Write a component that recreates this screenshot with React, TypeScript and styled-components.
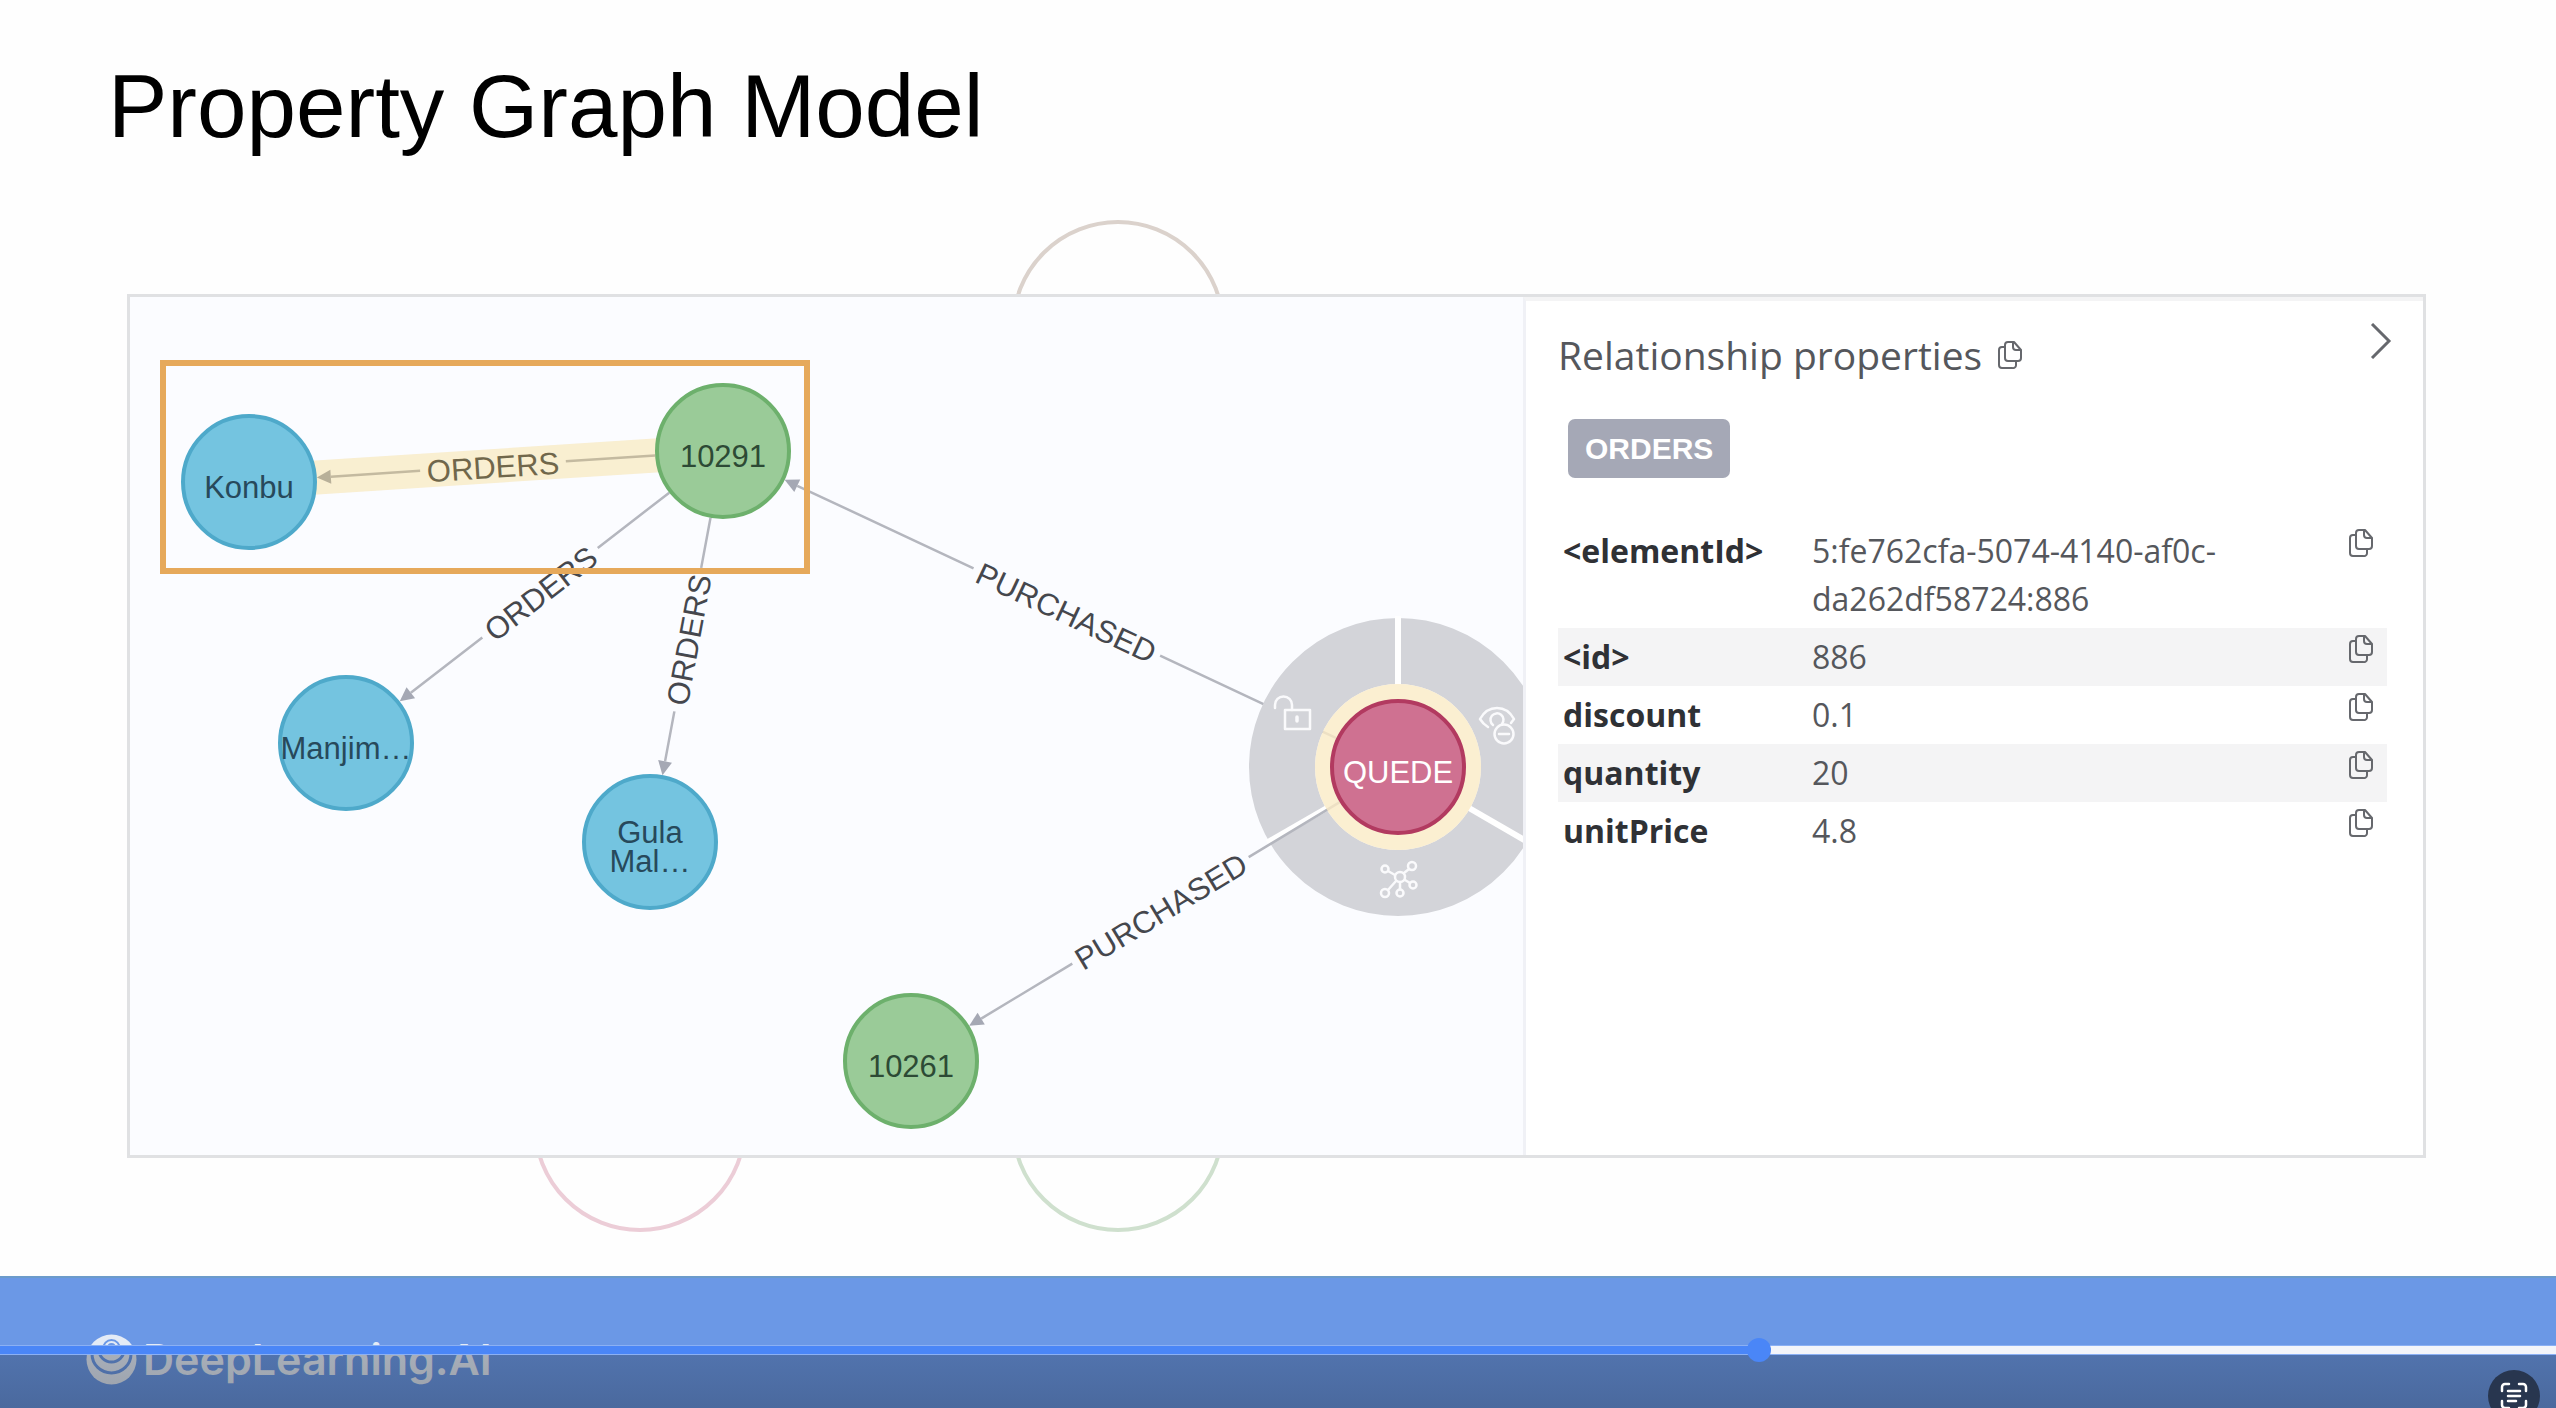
import React from "react";
import styled, { createGlobalStyle } from "styled-components";

const GlobalStyle = createGlobalStyle`
  *, *::before, *::after { box-sizing: border-box; }
  body { margin: 0; background: #fefefe; overflow: hidden; }
`;

const sans = `"Liberation Sans", Arial, sans-serif`;
const humanist = `"Open Sans", "Noto Sans", sans-serif`;

const Player = styled.main`
  display: flex;
  flex-direction: column;
  height: 100vh;
  font-family: ${sans};
  overflow: hidden;
`;

const Slide = styled.section`
  flex: 1;
  padding: 56px 130px 0 127px;
`;

const Title = styled.h1`
  margin: 0 0 0 -19px;
  font-size: 89px;
  line-height: 100px;
  font-weight: 400;
  color: #000;
`;

const Stage = styled.div`
  position: relative;
  margin-top: 138px;
`;

const Ring = styled.span<{ $x: number; $edge: "top" | "bottom"; $color: string }>`
  position: absolute;
  left: ${(p) => p.$x}px;
  ${(p) => p.$edge}: -74px;
  width: 214px;
  height: 214px;
  border: 4px solid ${(p) => p.$color};
  border-radius: 50%;
`;

const Card = styled.div`
  position: relative;
  display: grid;
  grid-template-columns: minmax(0, 1393fr) minmax(0, 900fr);
  border: 3px solid #e0e1e3;
  background: #fff;
`;

const GraphArea = styled.div`
  background: #fbfcff;
`;

const GraphSvg = styled.svg`
  display: block;
  width: 100%;
  height: auto;
  font-family: ${sans};
  font-size: 31px;
`;

const Details = styled.aside`
  padding: 22px 36px 0 32px;
  border-left: 3px solid #f0f1f6;
  border-top: 4px solid #f4f4f5;
  font-family: ${humanist};
  color: #55575c;
`;

const DetailsHead = styled.header`
  display: flex;
  align-items: flex-start;
  justify-content: space-between;
`;

const Heading = styled.h2`
  display: flex;
  align-items: center;
  gap: 16px;
  margin: 0;
  padding-top: 4px;
  font-size: 39px;
  line-height: 56px;
  font-weight: 400;
`;

const IconButton = styled.button`
  display: block;
  padding: 0;
  border: 0;
  background: none;
  color: #66686d;
  line-height: 0;
`;

const ChevronButton = styled(IconButton)`
  margin-right: -6px;
`;

const Badge = styled.span`
  display: inline-block;
  margin: 36px 0 0 10px;
  padding: 0 17px;
  border-radius: 7px;
  background: #a5a8b6;
  color: #fff;
  font: 700 30px/59px ${sans};
`;

const Table = styled.table`
  width: 100%;
  margin-top: 44px;
  border-collapse: collapse;
  font-size: 32px;
  line-height: 48px;
`;

const Row = styled.tr`
  vertical-align: top;
  &:nth-child(even) { background: #f4f4f5; }
`;

const Key = styled.th`
  width: 254px;
  padding: 5px;
  text-align: left;
  font-weight: 700;
  color: #2f3135;
`;

const Value = styled.td`
  padding: 5px 0;
`;

const Wrapped = styled.div`
  max-width: 440px;
  overflow-wrap: break-word;
`;

const Action = styled.td`
  width: 38px;
  padding: 7px 0 0;
`;

const Footer = styled.footer`
  position: relative;
  height: 132px;
  padding: 55px 0 0 86px;
  background: #6b98e6;
  border-top: 2px solid #6c9bcb;
`;

const Brand = styled.div`
  display: flex;
  align-items: center;
  gap: 6px;
  color: #e4ebf6;
  font: 600 43px/52px Inter, sans-serif;
`;

const Shade = styled.div`
  position: absolute;
  inset: auto 0 0 0;
  height: 58px;
  background: linear-gradient(rgba(16, 22, 30, 0.28), rgba(16, 22, 30, 0.36));
`;

const Seek = styled.input`
  position: absolute;
  left: 0;
  bottom: 46px;
  width: 100%;
  height: 24px;
  margin: 0;
  appearance: none;
  background: none;

  &::-webkit-slider-runnable-track {
    height: 10px;
    border: solid #8bb0f4;
    border-width: 1px 0;
    background: linear-gradient(90deg, #4a86f7 68.8%, #f3f5fa 68.8%);
  }
  &::-webkit-slider-thumb {
    appearance: none;
    width: 24px;
    height: 24px;
    margin-top: -8px;
    border-radius: 50%;
    background: #4a86f7;
  }
`;

const ScanButton = styled.button`
  position: fixed;
  right: 16px;
  bottom: -14px;
  display: grid;
  place-items: center;
  width: 52px;
  height: 52px;
  padding: 0;
  border: 0;
  border-radius: 50%;
  background: #28364f;
  color: #fff;
`;

type Palette = { fill: string; stroke: string; text: string };
const blue: Palette = { fill: "#74c4e0", stroke: "#4ea9ca", text: "#27495b" };
const green: Palette = { fill: "#9acb98", stroke: "#6db06c", text: "#2d4a35" };
const pink: Palette = { fill: "#cf7191", stroke: "#b23a60", text: "#ffffff" };

type NodeData = { x: number; y: number; lines: string[]; palette: Palette };
const nodes: Record<string, NodeData> = {
  konbu: { x: 119, y: 185, lines: ["Konbu"], palette: blue },
  o10291: { x: 593, y: 154, lines: ["10291"], palette: green },
  manjim: { x: 216, y: 446, lines: ["Manjim…"], palette: blue },
  gula: { x: 520, y: 545, lines: ["Gula", "Mal…"], palette: blue },
  o10261: { x: 781, y: 764, lines: ["10261"], palette: green },
  quede: { x: 1268, y: 470, lines: ["QUEDE"], palette: pink },
};

const R = 68;
const HEAD = 14;

function GraphNode({ x, y, lines, palette }: NodeData) {
  const first = lines.length === 1 ? y + 16 : y + 1;
  return (
    <g>
      <circle cx={x} cy={y} r={R - 2} fill={palette.fill} stroke={palette.stroke} strokeWidth={4} />
      <text textAnchor="middle" fill={palette.text}>
        {lines.map((line, i) => (
          <tspan key={line} x={x} y={first + i * 29}>
            {line}
          </tspan>
        ))}
      </text>
    </g>
  );
}

function Edge({ from, to, label, gap, selected }: { from: string; to: string; label: string; gap: number; selected?: boolean }) {
  const a = nodes[from];
  const b = nodes[to];
  const dx = b.x - a.x;
  const dy = b.y - a.y;
  const length = Math.hypot(dx, dy);
  const angle = (Math.atan2(dy, dx) * 180) / Math.PI;
  const end = length - R;
  const mid = (R + end - HEAD) / 2;
  const flip = Math.abs(angle) > 90;
  return (
    <g transform={`translate(${a.x} ${a.y}) rotate(${angle})`}>
      <path
        d={`M${R} 0H${mid - gap / 2}M${mid + gap / 2} 0H${end - HEAD}`}
        stroke="#b4b6be"
        strokeWidth={2.5}
      />
      <path d={`M${end} 0l${-HEAD} -7v14z`} fill="#a5a8b4" />
      <text transform={`translate(${mid} 0) rotate(${flip ? 180 : 0})`} y={12} textAnchor="middle" fill="#45474d">
        {label}
      </text>
      {selected && <rect x={R - 4} y={-17} width={end - R + 8} height={34} fill="#f5c646" fillOpacity={0.25} />}
    </g>
  );
}

function polar(deg: number, r: number) {
  const t = (deg * Math.PI) / 180;
  return `${nodes.quede.x + r * Math.cos(t)} ${nodes.quede.y + r * Math.sin(t)}`;
}

function NodeMenu() {
  return (
    <g>
      <circle cx={1268} cy={470} r={116} fill="none" stroke="#d3d4d9" strokeWidth={66} />
      {[-90, 30, 150].map((deg) => (
        <path key={deg} d={`M${polar(deg, 82)}L${polar(deg, 151)}`} stroke="#fff" strokeWidth={6} />
      ))}
      <g fill="none" stroke="#fafafc" strokeWidth={2.5} strokeLinecap="round" strokeLinejoin="round">
        <path d="M1145 411V408a8.5 8.5 0 0 1 17 0V413" />
        <rect x={1155} y={413} width={25} height={19} />
        <path d="M1167 420v4" strokeWidth={3.5} />
        <path d="M1358 430q-5-3-8-8q6-11 17-11t17 11l-3 4" />
        <path d="M1363 428a6.5 6.5 0 1 1 9 -1" />
        <circle cx={1374} cy={437} r={9.5} />
        <path d="M1369 437h10" />
        <circle cx={1270} cy={580} r={5} />
        <circle cx={1255} cy={572} r={3.5} />
        <circle cx={1282} cy={569} r={4} />
        <circle cx={1283} cy={588} r={3.5} />
        <circle cx={1270} cy={596} r={3.5} />
        <circle cx={1255} cy={596} r={4} />
        <path d="M1258 574l7 4M1274 576l5-4M1275 583l5 3M1270 586v6M1266 584l-8 9" />
      </g>
    </g>
  );
}

function Graph() {
  return (
    <GraphSvg viewBox="0 0 1393 858" role="img" aria-label="Customer, order and product graph">
      <Edge from="quede" to="o10291" label="PURCHASED" gap={206} />
      <NodeMenu />
      <Edge from="quede" to="o10261" label="PURCHASED" gap={206} />
      <Edge from="o10291" to="manjim" label="ORDERS" gap={146} />
      <Edge from="o10291" to="gula" label="ORDERS" gap={146} />
      <Edge from="o10291" to="konbu" label="ORDERS" gap={146} selected />
      <circle cx={1268} cy={470} r={75} fill="none" stroke="#fbebc5" strokeOpacity={0.8} strokeWidth={16} />
      {Object.entries(nodes).map(([id, node]) => (
        <GraphNode key={id} {...node} />
      ))}
      <rect x={33} y={66} width={644} height={208} fill="none" stroke="#e6a95b" strokeWidth={6} />
    </GraphSvg>
  );
}

function CopyIcon() {
  return (
    <svg width="24" height="28" viewBox="0 0 24 28" fill="none" stroke="currentColor" strokeWidth="2" strokeLinejoin="round">
      <path d="M10 1h6l7 8v8a3 3 0 0 1-3 3H10a3 3 0 0 1-3-3V4a3 3 0 0 1 3-3z" />
      <path d="M15 1v5a3 3 0 0 0 3 3h5" />
      <path d="M7 6H4a3 3 0 0 0-3 3v15a3 3 0 0 0 3 3h10a3 3 0 0 0 4-3v-4" />
    </svg>
  );
}

const properties = [
  ["<elementId>", "5:fe762cfa-5074-4140-af0c-da262df58724:886"],
  ["<id>", "886"],
  ["discount", "0.1"],
  ["quantity", "20"],
  ["unitPrice", "4.8"],
];

function BrandMark() {
  return (
    <svg width="51" height="51" viewBox="0 0 51 51" fill="none">
      <circle cx="25.500" cy="25.500" r="25" fill="currentColor" />
      <g stroke="#6b98e6" strokeWidth="3">
        <path d="M6 20A19.500 19 0 0 0 45 20" />
        <path d="M13 16A12.500 12 0 0 0 38 16" />
        <path d="M17 15A8.500 9 0 0 1 34 15" strokeWidth="2" />
      </g>
      <circle cx="25.500" cy="13" r="4" fill="#6b98e6" />
    </svg>
  );
}

export default function App() {
  return (
    <Player>
      <GlobalStyle />
      <Slide>
        <Title>Property Graph Model</Title>
        <Stage>
          <Ring $x={884} $edge="top" $color="#dbd2cc" />
          <Ring $x={406} $edge="bottom" $color="#eccdd7" />
          <Ring $x={884} $edge="bottom" $color="#cfe0ce" />
          <Card>
            <GraphArea>
              <Graph />
            </GraphArea>
            <Details>
              <DetailsHead>
                <Heading>
                  Relationship properties
                  <IconButton aria-label="Copy all properties">
                    <CopyIcon />
                  </IconButton>
                </Heading>
                <ChevronButton aria-label="Collapse panel">
                  <svg width="24" height="36" viewBox="0 0 24 36" fill="none" stroke="currentColor" strokeWidth="3">
                    <path d="M3 1l17 17L3 35" />
                  </svg>
                </ChevronButton>
              </DetailsHead>
              <Badge>ORDERS</Badge>
              <Table>
                <tbody>
                  {properties.map(([name, value]) => (
                    <Row key={name}>
                      <Key scope="row">{name}</Key>
                      <Value>
                        <Wrapped>{value}</Wrapped>
                      </Value>
                      <Action>
                        <IconButton aria-label={`Copy ${name}`}>
                          <CopyIcon />
                        </IconButton>
                      </Action>
                    </Row>
                  ))}
                </tbody>
              </Table>
            </Details>
          </Card>
        </Stage>
      </Slide>
      <Footer>
        <Brand>
          <BrandMark />
          DeepLearning.AI
        </Brand>
        <Shade />
        <Seek type="range" aria-label="Seek" min={0} max={1000} defaultValue={690} />
        <ScanButton aria-label="Scan text">
          <svg width="28" height="28" viewBox="0 0 28 28" fill="none" stroke="currentColor" strokeWidth="2.500" strokeLinecap="round">
            <path d="M2 9V5a3 3 0 0 1 3-3h4M19 2h4a3 3 0 0 1 3 3v4M26 19v4a3 3 0 0 1-3 3h-4M9 26H5a3 3 0 0 1-3-3v-4" />
            <path d="M8 9h12M8 14h12M8 19h8" />
          </svg>
        </ScanButton>
      </Footer>
    </Player>
  );
}
